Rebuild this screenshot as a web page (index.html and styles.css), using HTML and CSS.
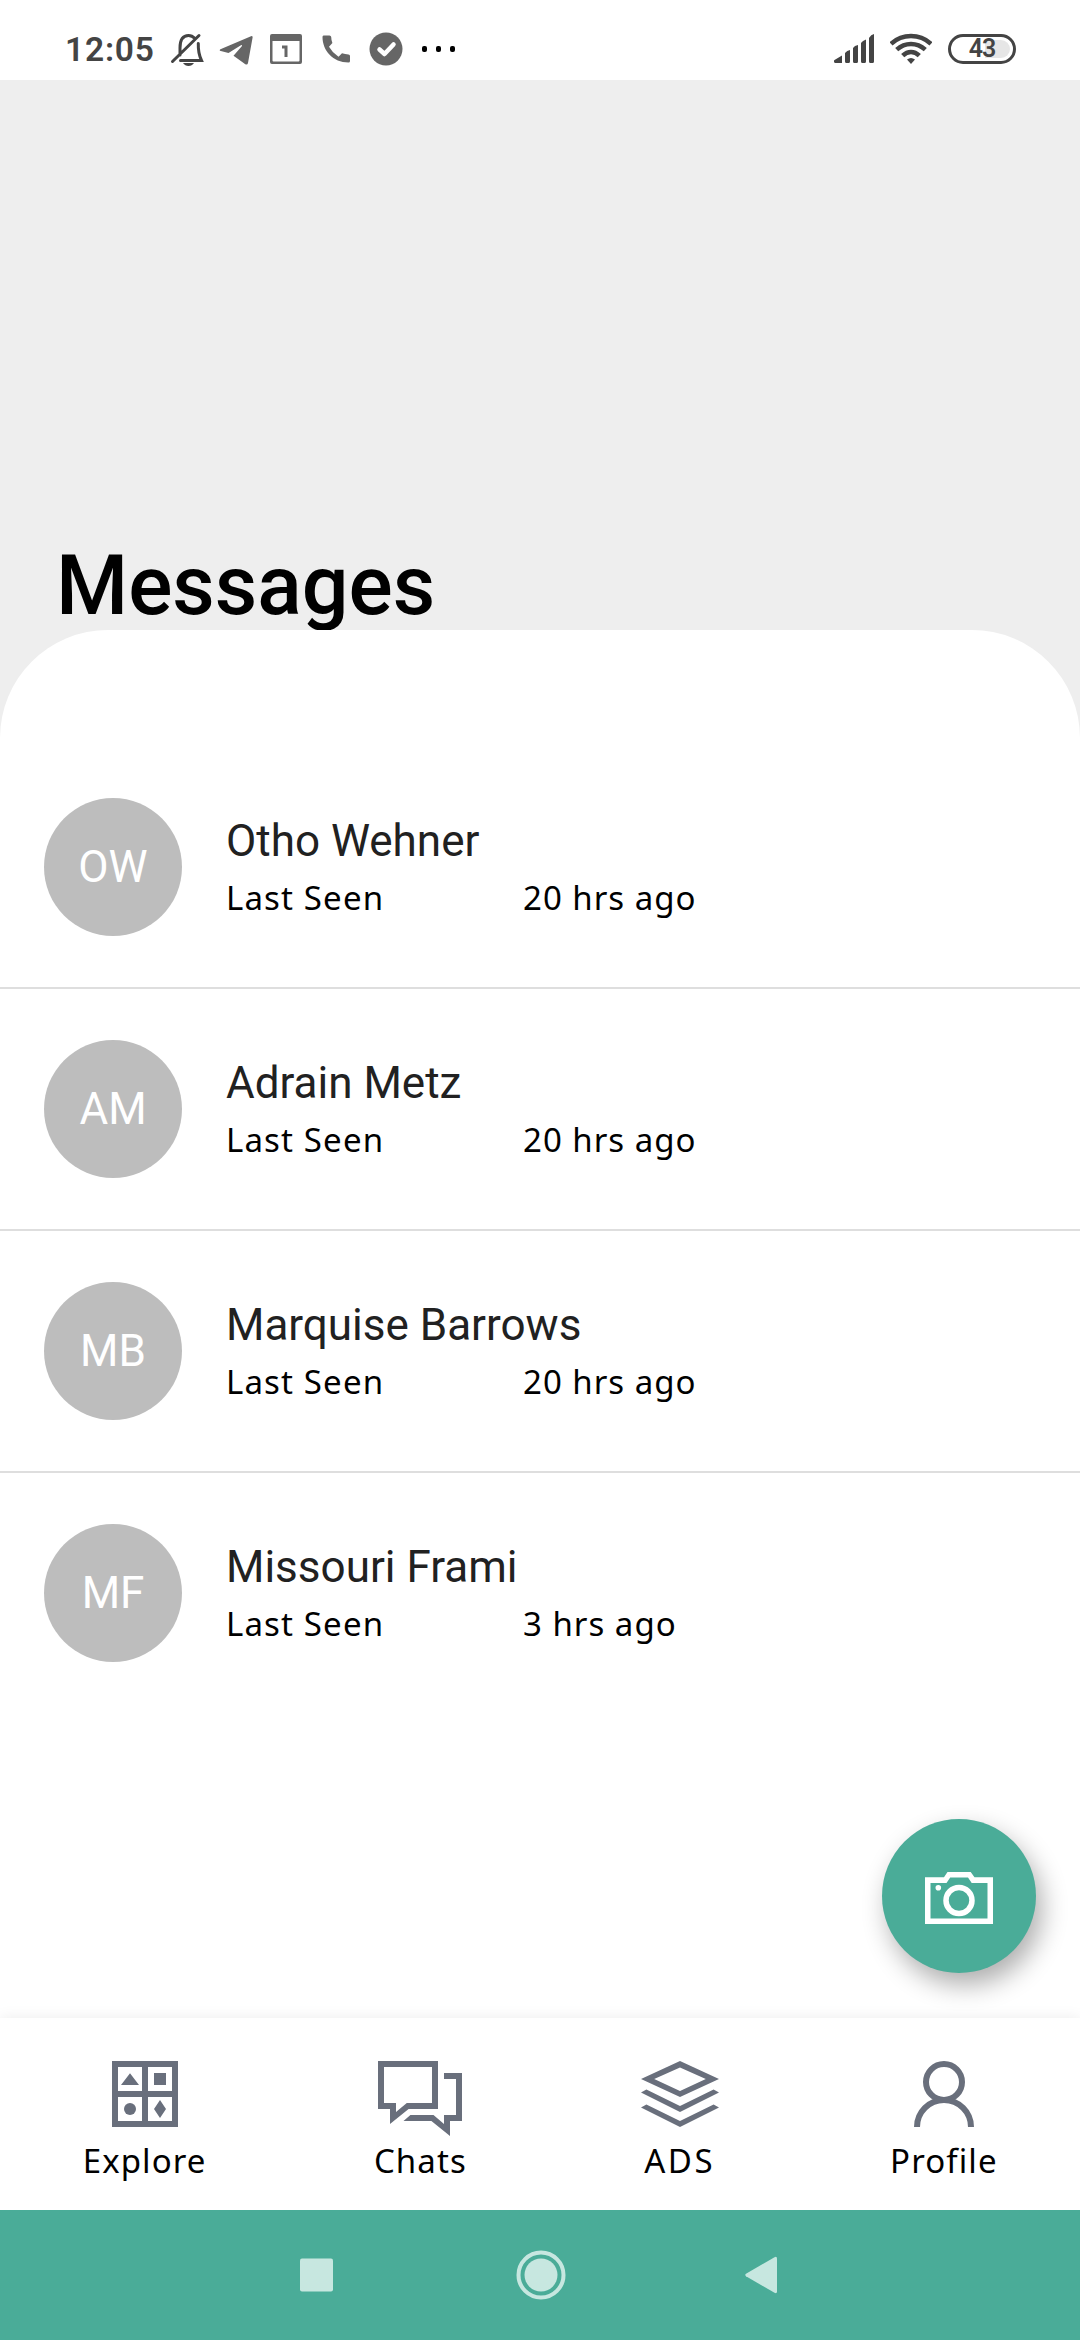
FILE: index.html
```html
<!DOCTYPE html>
<html lang="en">
<head>
<meta charset="utf-8">
<title>Messages</title>
<link rel="stylesheet" href="styles.css">
</head>
<body>
<div class="screen">
  <div class="status">
    <span class="clock">12:05</span>
    <div class="status-left">
      <svg width="34" height="40" viewBox="170 30 34 40" fill="none" stroke="#444" stroke-width="3"><path d="M180 55V48C180 38 184 35.500 188.500 35.500Q192 35.500 195 38.500M198.300 43.500Q198 53 201.500 60.500H180.500M172.500 61.500L199 35.500" stroke-linecap="round"/><path d="M183 63H194Q192 66 188.500 66T183 63Z" fill="#444" stroke="none"/></svg>
      <svg width="34" height="40" viewBox="219 30 34 40" fill="#666"><path d="M221 49L251 36.200Q252.800 35.700 252.600 37.500L248 63Q247.300 65.500 245 64L233.500 55.800L242 46Q242.500 44.500 240.500 45.500L228.500 53L220.800 51Q218.500 50.200 221 49Z"/></svg>
      <svg width="32" height="40" viewBox="270 30 32 40"><path fill="#666" fill-rule="evenodd" d="M272 34H300Q302 34 302 36V62Q302 64 300 64H272Q270 64 270 62V36Q270 34 272 34ZM272.500 41V60.500Q272.500 61.500 273.500 61.500H298.500Q299.500 61.500 299.500 60.500V41Z"/><path d="M282 47H286V57" fill="none" stroke="#666" stroke-width="3"/></svg>
      <svg width="28" height="40" viewBox="322 30 28 40" fill="#666"><path d="M323.500 35.500H329.500Q331 35.500 331.200 37Q331.300 40.500 332.400 43L329 46.800Q332.500 53 338.500 56.800L342 53.300Q345 54.300 348.500 54.500Q350 54.600 350 56V61Q350 62.500 348.500 62.500C333 62.500 322.500 50.500 322.500 37Q322.500 35.500 323.500 35.500Z"/></svg>
      <svg width="34" height="40" viewBox="369 30 34 40"><circle cx="386" cy="49" r="16.500" fill="#666"/><path d="M379.500 49.500L384.500 54L393.500 44.500" fill="none" stroke="#fff" stroke-width="4.500" stroke-linecap="round" stroke-linejoin="round"/></svg>
      <svg width="34" height="40" viewBox="422 30 34 40"><rect x="422" y="46" width="5" height="6" rx="2"/><rect x="436" y="46" width="5" height="6" rx="2"/><rect x="450" y="46" width="5" height="6" rx="2"/></svg>
    </div>
    <div class="status-right">
      <svg width="40" height="40" viewBox="834 30 40 40" fill="#444"><path d="M842 55.500V63H835Q833 61.500 834.500 60ZM845 53Q847 50.500 850 50V61.500Q850 63 848.500 63H846.500Q845 63 845 61.500ZM853 48Q854.500 45.500 858 45V61.500Q858 63 856.500 63H854.500Q853 63 853 61.500ZM861 43Q862.500 40.500 866 39.500V61.500Q866 63 864.500 63H862.500Q861 63 861 61.500ZM869 38Q871 34.500 874 34V61.500Q874 63 872.500 63H870.500Q869 63 869 61.500Z"/></svg>
      <svg width="42" height="40" viewBox="890 30 42 40" fill="none" stroke="#444" stroke-width="4.500"><path d="M891 43.800Q899.500 36 911 36T931 43.800M896.700 49.700Q903 44 911 44T925.300 49.700M902.700 55.700Q906.500 52 911 52T919.300 55.700"/><path d="M907 59.500Q911 56.500 915 59.500L911 64Z" fill="#444" stroke="none"/></svg>
      <div class="battery"><span>43</span></div>
    </div>
  </div>

  <header class="hero"><h1>Messages</h1></header>

  <main class="panel">
    <div class="row">
      <div class="avatar">OW</div>
      <div class="info"><div class="name">Otho Wehner</div><div class="meta"><span>Last Seen</span><span class="time">20 hrs ago</span></div></div>
    </div>
    <div class="row">
      <div class="avatar">AM</div>
      <div class="info"><div class="name">Adrain Metz</div><div class="meta"><span>Last Seen</span><span class="time">20 hrs ago</span></div></div>
    </div>
    <div class="row">
      <div class="avatar">MB</div>
      <div class="info"><div class="name">Marquise Barrows</div><div class="meta"><span>Last Seen</span><span class="time">20 hrs ago</span></div></div>
    </div>
    <div class="row">
      <div class="avatar">MF</div>
      <div class="info"><div class="name">Missouri Frami</div><div class="meta"><span>Last Seen</span><span class="time">3 hrs ago</span></div></div>
    </div>
    <div class="fab">
      <svg width="68" height="52" viewBox="0 0 68 52"><path fill="#fff" fill-rule="evenodd" d="M0 5.300H19L22.500 0H45.700L49.500 5.300H68V52H0ZM5.500 11V46.500H62.500V11H46.700L43 5.500H25.200L21.500 11Z"/><circle cx="34" cy="28.500" r="13" fill="none" stroke="#fff" stroke-width="5.500"/><circle cx="13.300" cy="15.800" r="2.800" fill="#fff"/></svg>
    </div>
  </main>

  <nav class="tabs">
    <div class="tab explore">
      <svg width="66" height="75" viewBox="0 0 22 25"><path fill-rule="evenodd" d="M0 0H22V22H0ZM2 2V10H10V2ZM12 2V10H20V2ZM2 12V20H10V12ZM12 12V20H20V12Z"/><path d="M6 4.100L9 8H3ZM14 4H18V8H14ZM16 13L18 16L16 19L14 16Z"/><circle cx="6" cy="16" r="2"/></svg>
      <span>Explore</span>
    </div>
    <div class="tab chats">
      <svg width="84" height="75" viewBox="0 0 28 25"><path fill-rule="evenodd" d="M0 0H20V16H10.200L4 21V16H0ZM2 2V14H6V17L9.600 14H18V2Z"/><path d="M22 4H28V20H24V25L17.800 20H8.500L10.800 18H18.500L22 21V18H26V6H22Z"/></svg>
      <span>Chats</span>
    </div>
    <div class="tab ads">
      <svg width="78" height="75" viewBox="0 0 26 25"><path fill-rule="evenodd" d="M13 0L26 6L13 12L0 6ZM13 2.200L4.400 6L13 10L21.600 6Z"/><path d="M1.800 9.500L13 15L24.200 9.500L26 10.500L13 17L0 10.500ZM1.800 14.500L13 20L24.200 14.500L26 15.500L13 22L0 15.500Z"/></svg>
      <span>ADS</span>
    </div>
    <div class="tab profile">
      <svg width="60" height="75" viewBox="0 0 20 25" class="line"><circle cx="10" cy="7" r="6"/><path d="M1 22A9 9 0 0 1 19 22"/></svg>
      <span>Profile</span>
    </div>
  </nav>

  <div class="system">
    <svg width="33" height="50" viewBox="0 0 33 50"><rect y="8.500" width="33" height="33" rx="2"/></svg>
    <svg class="home" width="50" height="50" viewBox="0 0 50 50"><circle cx="25" cy="25" r="16.500"/><circle cx="25" cy="25" r="22.500" fill="none" stroke="#c7e7e0" stroke-width="4"/></svg>
    <svg width="32" height="50" viewBox="0 0 32 50"><path d="M1 23.800L29.500 7.200Q32 6 32 8.500V41.500Q32 44 29.500 42.800L1 26.200Q-.5 25 1 23.800Z"/></svg>
  </div>
</div>
</body>
</html>
```
FILE: styles.css
```css
* { box-sizing: border-box; }
body { margin: 0; font-family: Roboto, sans-serif; background: #fff; }
svg { display: block; flex: none; }
.screen { width: 1080px; height: 2340px; display: flex; flex-direction: column; overflow: hidden; background: #eee; }

.status { height: 80px; flex: none; display: flex; align-items: flex-start; padding: 30px 64px 0 65px; background: #fff; }
.clock { width: 105px; font-size: 33.5px; line-height: 40px; font-weight: 600; letter-spacing: .8px; color: #444; white-space: nowrap; }
.status-left { display: flex; gap: 19px; }
.status-left svg:nth-child(2) { margin-left: -4px; }
.status-left svg:nth-child(3) { margin-left: -2px; }
.status-left svg:nth-child(4) { margin-left: 1px; }
.status-right { display: flex; margin-left: auto; gap: 16px; }
.battery { width: 68px; height: 30px; margin-top: 4px; border: 3px solid #444; border-radius: 15px; padding: 3px 3px; display: flex; align-items: center; justify-content: center; background: linear-gradient(90deg, #fff 55%, #e6e6e6 55%) content-box; font-size: 25px; font-weight: 600; line-height: 24px; letter-spacing: -1px; color: #444; }

.hero { height: 550px; flex: none; padding: 0 56px; display: flex; align-items: flex-end; background: #eee; }
h1 { margin: 0 0 -6px; font-size: 82.5px; line-height: 100px; font-weight: 500; color: #000; }

.panel { position: relative; height: 1388px; flex: none; padding-top: 117px; background: #fff; border-radius: 108px 108px 0 0; }
.row { height: 242px; padding: 51px 44px 0; display: flex; gap: 44px; border-bottom: 2px solid #dedede; }
.row:nth-child(4) { border-bottom: 0; }
.avatar { width: 138px; height: 138px; flex: none; border-radius: 50%; background: #bdbdbd; color: #fff; font-size: 44px; line-height: 138px; text-align: center; }
.info { padding-top: 17px; }
.name { font-size: 44px; line-height: 52px; color: #212121; white-space: nowrap; }
.meta { display: grid; grid-template-columns: 297px auto; margin-top: 7px; font-family: "Noto Sans", sans-serif; font-size: 33px; line-height: 48px; letter-spacing: 1.15px; color: #000; white-space: nowrap; }
.time { letter-spacing: 1px; }
.fab { position: absolute; right: 44px; bottom: 45px; width: 154px; height: 154px; border-radius: 50%; display: flex; align-items: center; justify-content: center; padding-top: 3px; background: #4aac98; box-shadow: 6px 12px 26px rgba(0, 0, 0, .32); }

.tabs { position: relative; height: 192px; flex: none; display: flex; justify-content: space-around; padding-top: 43px; background: #fff; box-shadow: 0 0 14px rgba(0, 0, 0, .08); }
.tab { display: flex; flex-direction: column; align-items: center; font-family: "Noto Sans", sans-serif; font-size: 33px; line-height: 48px; letter-spacing: 1.1px; color: #000; white-space: nowrap; }
.tab svg { fill: #696f7c; }
.tab svg.line { fill: none; stroke: #696f7c; stroke-width: 2; }
.tab span { margin-top: 1px; }
.explore { width: 124px; }
.chats { width: 97px; }
.ads { width: 91px; letter-spacing: 2.5px; }
.profile { width: 107px; }

.system { position: relative; height: 130px; flex: none; display: flex; align-items: center; justify-content: space-between; padding: 0 303px 0 300px; background: #4aac98; }
.system svg { fill: #c7e7e0; }
.home { margin-left: 3px; }
```
